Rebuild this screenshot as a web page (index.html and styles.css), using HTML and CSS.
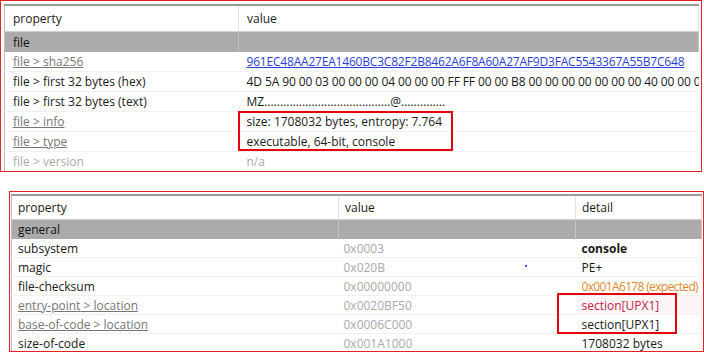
FILE: index.html
```html
<!DOCTYPE html>
<html lang="en">
<head>
    <meta charset="UTF-8">
    <title>pestudio</title>
    <link rel="stylesheet" href="styles.css">
</head>
<body>
    <div class="panel panel-top">
        <table class="grid grid-file">
            <colgroup><col class="c-prop"><col></colgroup>
            <thead>
                <tr><th>property</th><th>value</th></tr>
            </thead>
            <tbody>
                <tr class="group"><td>file</td><td></td></tr>
                <tr><td class="muted link">file &gt; sha256</td><td class="blue">961EC48AA27EA1460BC3C82F2B8462A6F8A60A27AF9D3FAC5543367A55B7C648</td></tr>
                <tr><td>file &gt; first 32 bytes (hex)</td><td class="hex">4D 5A 90 00 03 00 00 00 04 00 00 00 FF FF 00 00 B8 00 00 00 00 00 00 00 40 00 00 00 00 00 00 00</td></tr>
                <tr><td>file &gt; first 32 bytes (text)</td><td>MZ........................................@..............</td></tr>
                <tr><td class="muted link">file &gt; info</td><td>size: 1708032 bytes, entropy: 7.764</td></tr>
                <tr><td class="muted link">file &gt; type</td><td>executable, 64-bit, console</td></tr>
                <tr><td class="faint">file &gt; version</td><td class="faint">n/a</td></tr>
            </tbody>
        </table>
        <div class="mark mark-info"></div>
    </div>

    <div class="panel panel-bottom">
        <table class="grid grid-pe">
            <colgroup><col class="c-prop2"><col class="c-val2"><col></colgroup>
            <thead>
                <tr><th>property</th><th>value</th><th>detail</th></tr>
            </thead>
            <tbody>
                <tr class="group"><td>general</td><td></td><td></td></tr>
                <tr><td>subsystem</td><td class="faint">0x0003</td><td class="bold">console</td></tr>
                <tr><td>magic</td><td class="faint">0x020B<span class="dot"></span></td><td>PE+</td></tr>
                <tr><td>file-checksum</td><td class="faint">0x00000000</td><td class="orange">0x001A6178 (expected)</td></tr>
                <tr><td class="muted link">entry-point &gt; location</td><td class="faint">0x0020BF50</td><td class="crimson">section[UPX1]</td></tr>
                <tr><td class="muted link">base-of-code &gt; location</td><td class="faint">0x0006C000</td><td>section[UPX1]</td></tr>
                <tr><td>size-of-code</td><td class="faint">0x001A1000</td><td>1708032 bytes</td></tr>
            </tbody>
        </table>
        <div class="mark mark-section"></div>
    </div>
</body>
</html>
```

FILE: styles.css
```css
body {
    margin: 0;
    width: 704px;
    height: 352px;
    overflow: hidden;
    background: #fff;
    font-family: "Open Sans", "Noto Sans", sans-serif;
    font-size: 12px;
    color: #1a1a1a;
}
.panel {
    position: relative;
    border: 1px solid #e8202a;
    box-sizing: border-box;
    overflow: hidden;
}
.panel-top {
    width: 702px;
    height: 172px;
    padding: 3px 2px 0 3px;
}
.panel-bottom {
    margin: 19px 0 0 9px;
    width: 695px;
    height: 161px;
    padding: 2px 1px 0 1px;
}
.grid {
    width: 100%;
    table-layout: fixed;
    border-collapse: collapse;
    border-left: 1px solid #bdbdbd;
    border-top: 2px solid #9a9a9a;
}
.c-prop { width: 234px; }
.c-prop2 { width: 327px; }
.c-val2 { width: 237px; }
.grid th, .grid td {
    text-align: left;
    font-weight: normal;
    white-space: nowrap;
    overflow: hidden;
    padding: 0 0 0 8px;
    border-bottom: 1px solid #f0f0f0;
}
.grid th {
    border-right: 1px solid #e2e2e2;
    border-bottom: 1px solid #d0d0d0;
}
.grid-file th { height: 25px; }
.grid-file .group td { height: 20px; }
.grid-file td { height: 19px; }
.grid-pe th { height: 23px; padding-left: 6px; }
.grid-pe .group td { height: 19px; }
.grid-pe td { height: 18px; padding-left: 6px; }
.grid-pe td + td { padding-left: 5px; }
.grid-pe td + td + td { padding-left: 6px; }
.group td {
    background: #ababab;
    color: #111;
    border-right: 1px solid #c4c4c4;
    border-bottom: none;
}
.grid td.muted { color: #777; }
.grid td.link { text-decoration: underline; }
.grid td.blue { color: #2b3fd6; text-decoration: underline; letter-spacing: -0.2px; }
.grid td.hex { letter-spacing: -0.1px; }
.grid td.faint { color: #aaa; }
.grid td.bold { font-weight: bold; }
.grid td.orange { color: #e0862e; letter-spacing: -0.65px; }
.grid td.crimson { color: #c2264a; background: #fdf4f6; }
.dot {
    position: absolute;
    margin: 6px 0 0 140px;
    width: 2px;
    height: 2px;
    background: #4a4af0;
}
.mark {
    position: absolute;
    border: 2px solid #e3000b;
}
.mark-info {
    left: 237px;
    top: 110px;
    width: 211px;
    height: 36px;
}
.mark-section {
    left: 547px;
    top: 101px;
    width: 116px;
    height: 37px;
}
```
